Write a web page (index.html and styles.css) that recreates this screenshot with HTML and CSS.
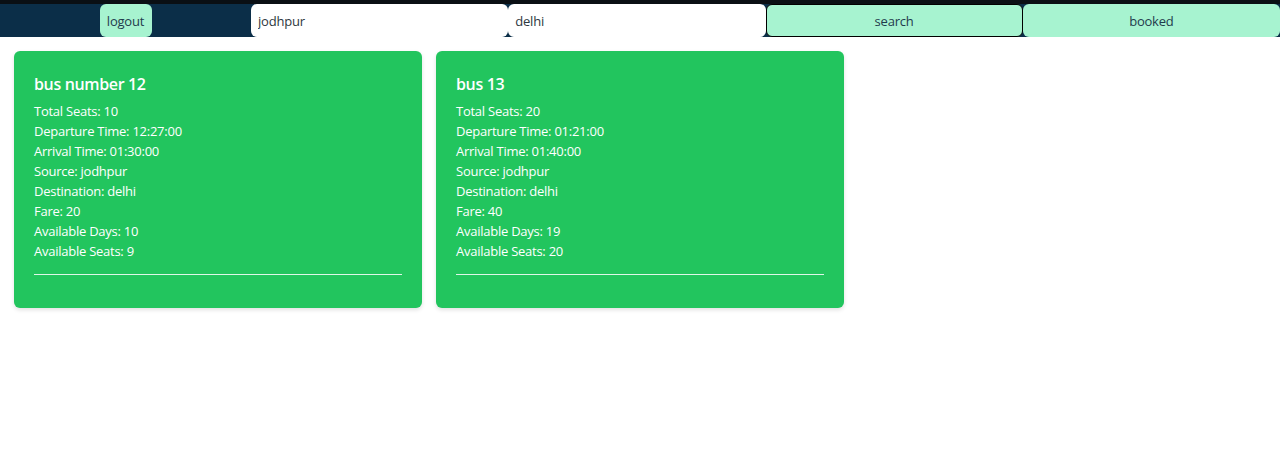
FILE: index.html
```html
<!DOCTYPE html>
<html>
<head>
<meta charset="utf-8">
<link rel="stylesheet" href="styles.css">
</head>
<body>
<div class="topline"></div>
<nav class="nav">
  <div class="nav-cell"><button class="logout">logout</button></div>
  <input class="field" type="text" value="jodhpur">
  <input class="field" type="text" value="delhi">
  <button class="btn btn-search">search</button>
  <button class="btn">booked</button>
</nav>
<main class="cards">
  <div class="card">
    <h2 class="card-title">bus number 12</h2>
    <p class="line">Total Seats: 10</p>
    <p class="line">Departure Time: 12:27:00</p>
    <p class="line">Arrival Time: 01:30:00</p>
    <p class="line">Source: jodhpur</p>
    <p class="line">Destination: delhi</p>
    <p class="line">Fare: 20</p>
    <p class="line">Available Days: 10</p>
    <p class="line">Available Seats: 9</p>
    <hr class="rule">
  </div>
  <div class="card">
    <h2 class="card-title">bus 13</h2>
    <p class="line">Total Seats: 20</p>
    <p class="line">Departure Time: 01:21:00</p>
    <p class="line">Arrival Time: 01:40:00</p>
    <p class="line">Source: jodhpur</p>
    <p class="line">Destination: delhi</p>
    <p class="line">Fare: 40</p>
    <p class="line">Available Days: 19</p>
    <p class="line">Available Seats: 20</p>
    <hr class="rule">
  </div>
</main>
</body>
</html>
```
FILE: styles.css
```css
* { box-sizing: border-box; }
body {
  margin: 0;
  font-family: "Open Sans", "Noto Sans", sans-serif;
  background: #fff;
}
.topline {
  height: 4px;
  background: #0a0f14;
}
.nav {
  display: grid;
  grid-template-columns: 251px repeat(4, 1fr);
  height: 33px;
  background: #0b2e48;
}
.nav-cell {
  display: flex;
  justify-content: center;
}
.logout {
  width: 52px;
  height: 33px;
  border: none;
  border-radius: 6px;
  background: #a7f3d0;
  color: #1f3b4d;
  font-family: inherit;
  font-size: 13px;
  padding: 0;
  letter-spacing: -0.2px;
}
.field {
  height: 33px;
  border: none;
  border-radius: 6px;
  background: #fff;
  color: #2d3740;
  padding: 0 7px;
  font-family: inherit;
  font-size: 13px;
  letter-spacing: -0.2px;
  outline: none;
  min-width: 0;
}
.btn {
  height: 33px;
  border: none;
  border-radius: 6px;
  background: #a7f3d0;
  color: #1f3b4d;
  font-family: inherit;
  font-size: 13px;
  letter-spacing: -0.2px;
}
.btn-search {
  border: 1px solid #000;
}
.cards {
  display: grid;
  grid-template-columns: repeat(3, 408px);
  gap: 14px;
  padding: 14px 14px;
}
.card {
  background: #22c55e;
  color: #fff;
  border-radius: 6px;
  padding: 22px 20px 33px;
  box-shadow: 0 2px 4px rgba(0,0,0,0.12);
}
.card-title {
  margin: 0 0 6px;
  font-size: 16px;
  font-weight: 600;
  line-height: 22px;
  letter-spacing: -0.35px;
}
.line {
  margin: 0;
  font-size: 13px;
  line-height: 20px;
  letter-spacing: -0.25px;
}
.rule {
  margin: 13px 0 0;
  border: none;
  border-top: 1px solid rgba(255,255,255,0.85);
}
```
